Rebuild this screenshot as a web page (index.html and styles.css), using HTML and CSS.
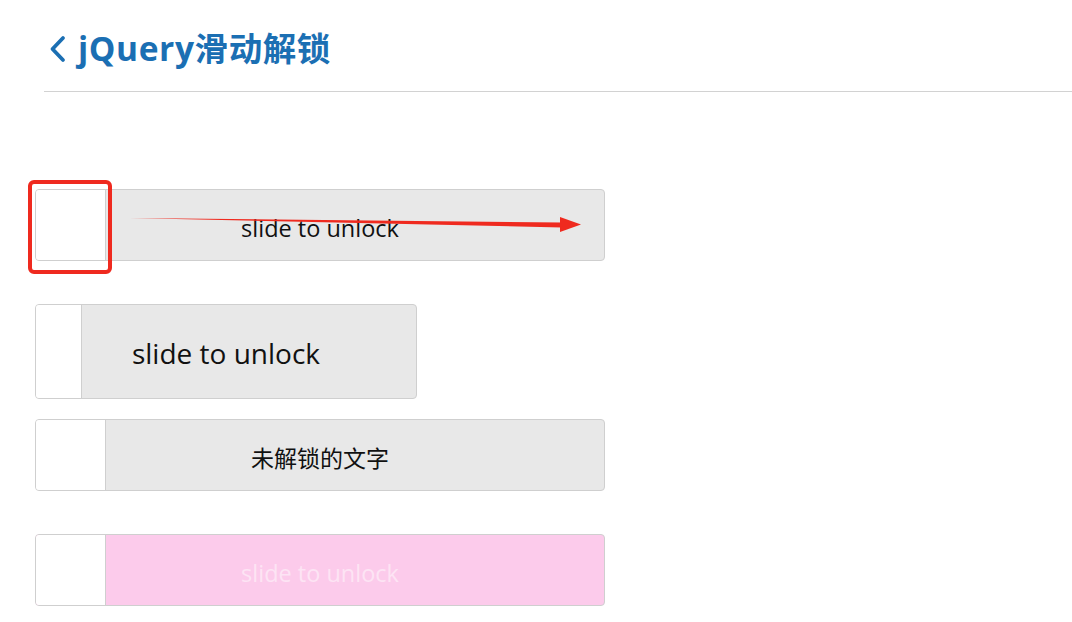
FILE: index.html
```html
<!DOCTYPE html>
<html lang="zh-CN">
<head>
<meta charset="utf-8">
<title>jQuery滑动解锁</title>
<link rel="stylesheet" href="styles.css">
</head>
<body>
<header class="page-header">
  <svg class="back" width="18" height="28" viewBox="0 0 18 28"><path d="M14 3 L3.5 14 L14 25" fill="none" stroke="#1b6fb3" stroke-width="3.8" stroke-linecap="round" stroke-linejoin="round"/></svg>
  <h1 class="title">jQuery滑动解锁</h1>
</header>
<main class="demo">
  <div class="slider slider-a">
    <div class="handle"></div>
    <span class="label">slide to unlock</span>
    <div class="annot-box"></div>
    <svg class="annot-arrow" width="460" height="20" viewBox="0 0 460 20"><path d="M0 3 L432 7.5 L432 12.5 Z" fill="#ef2a1f"/><path d="M430 2 L451 9.5 L430 17 Z" fill="#ef2a1f"/></svg>
  </div>
  <div class="slider slider-b">
    <div class="handle"></div>
    <span class="label">slide to unlock</span>
  </div>
  <div class="slider slider-c">
    <div class="handle"></div>
    <span class="label">未解锁的文字</span>
  </div>
  <div class="slider slider-d">
    <div class="handle"></div>
    <span class="label">slide to unlock</span>
  </div>
</main>
</body>
</html>
```
FILE: styles.css
```css
html, body {
  margin: 0;
  padding: 0;
  background: #ffffff;
}
body {
  font-family: "Open Sans", "Noto Sans CJK SC", sans-serif;
  color: #111;
}
.page-header {
  margin-left: 44px;
  height: 92px;
  border-bottom: 1px solid #d2d2d2;
  display: flex;
  align-items: center;
  padding-left: 5px;
  padding-top: 6px;
  gap: 11px;
  box-sizing: border-box;
}
.back {
  flex: none;
}
.title {
  margin: 0;
  font-size: 33.5px;
  font-weight: 700;
  color: #1b6fb3;
  letter-spacing: 0.6px;
  line-height: 1.2;
  font-family: "Open Sans", "Noto Sans CJK SC", sans-serif;
}
.demo {
  padding-top: 97px;
  padding-left: 35px;
  display: flex;
  flex-direction: column;
  align-items: flex-start;
}
.slider {
  position: relative;
  box-sizing: border-box;
  width: 570px;
  height: 72px;
  border: 1px solid #cfcfcf;
  border-radius: 4px;
  background: #e8e8e8;
  display: flex;
  align-items: center;
  justify-content: center;
}
.handle {
  position: absolute;
  left: 0;
  top: 0;
  bottom: 0;
  width: 69px;
  background: #fff;
  border-right: 1px solid #cfcfcf;
  border-radius: 3px 0 0 3px;
}
.label {
  font-size: 23.5px;
  padding-top: 6px;
}
.slider-b {
  margin-top: 43px;
  width: 382px;
  height: 95px;
}
.slider-b .handle {
  width: 45px;
}
.slider-b .label {
  font-size: 28px;
  padding-top: 2px;
}
.slider-c {
  margin-top: 20px;
}
.slider-c .label {
  font-size: 23px;
  padding-top: 4px;
}
.slider-d {
  margin-top: 43px;
  background: #fccbeb;
}
.slider-d .label {
  color: #fde4f4;
  padding-top: 6px;
}
.annot-box {
  position: absolute;
  left: -8px;
  top: -10px;
  width: 76px;
  height: 86px;
  border: 4px solid #ef2a1f;
  border-radius: 6px;
}
.annot-arrow {
  position: absolute;
  left: 94px;
  top: 25px;
}
```
